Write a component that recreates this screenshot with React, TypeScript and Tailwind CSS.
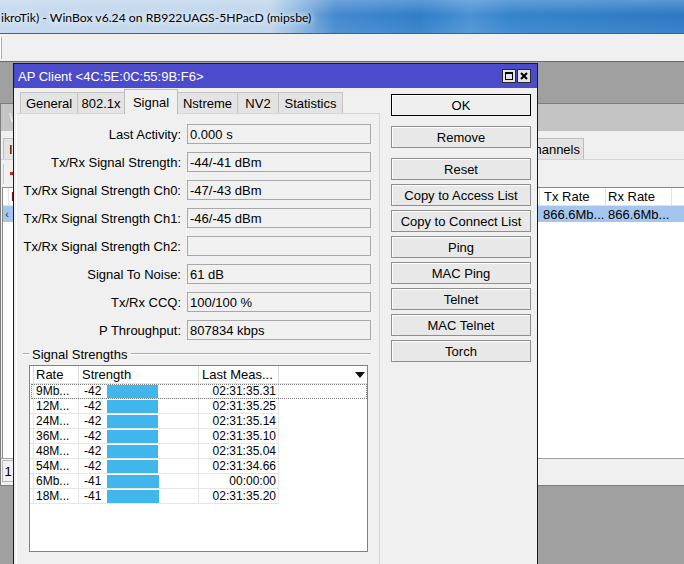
import React from "react";

const fields: [string, string][] = [
  ["Last Activity:", "0.000 s"],
  ["Tx/Rx Signal Strength:", "-44/-41 dBm"],
  ["Tx/Rx Signal Strength Ch0:", "-47/-43 dBm"],
  ["Tx/Rx Signal Strength Ch1:", "-46/-45 dBm"],
  ["Tx/Rx Signal Strength Ch2:", ""],
  ["Signal To Noise:", "61 dB"],
  ["Tx/Rx CCQ:", "100/100 %"],
  ["P Throughput:", "807834 kbps"],
];

const rates = [
  { rate: "9Mb...", s: "-42", wide: false, t: "02:31:35.31" },
  { rate: "12M...", s: "-42", wide: false, t: "02:31:35.25" },
  { rate: "24M...", s: "-42", wide: false, t: "02:31:35.14" },
  { rate: "36M...", s: "-42", wide: false, t: "02:31:35.10" },
  { rate: "48M...", s: "-42", wide: false, t: "02:31:35.04" },
  { rate: "54M...", s: "-42", wide: false, t: "02:31:34.66" },
  { rate: "6Mb...", s: "-41", wide: true, t: "00:00:00" },
  { rate: "18M...", s: "-41", wide: true, t: "02:31:35.20" },
];

const tabs = [
  { label: "General", cls: "w-[58px]" },
  { label: "802.1x", cls: "w-[48px]" },
  { label: "Signal", cls: "w-[54px]", active: true },
  { label: "Nstreme", cls: "w-[61px]" },
  { label: "NV2", cls: "w-[42px]" },
  { label: "Statistics", cls: "w-[65px]" },
];

const buttons = [
  { label: "OK", cls: "border-black bg-[#efefef]" },
  { label: "Remove", cls: "mt-[10px]" },
  { label: "Reset", cls: "mt-[10px]" },
  { label: "Copy to Access List", cls: "mt-[4px]" },
  { label: "Copy to Connect List", cls: "mt-[4px]" },
  { label: "Ping", cls: "mt-[4px]" },
  { label: "MAC Ping", cls: "mt-[4px]" },
  { label: "Telnet", cls: "mt-[4px]" },
  { label: "MAC Telnet", cls: "mt-[4px]" },
  { label: "Torch", cls: "mt-[4px]" },
];

/* tabs of the window behind; the ones fully hidden by the dialog carry no visible label */
const hiddenTabs = ["w-[90px]", "w-[75px]", "w-[82px]", "w-[80px]", "w-[118px]"];

function MaxBtn() {
  return (
    <svg width="14" height="14" viewBox="0 0 14 14">
      <rect x="0.5" y="0.5" width="13" height="13" fill="#e4e4e4" stroke="#2a2a2a" />
      <rect x="3.5" y="3.5" width="7" height="7" fill="none" stroke="#000" />
      <line x1="3" y1="4.5" x2="11" y2="4.5" stroke="#000" />
    </svg>
  );
}

function CloseBtn() {
  return (
    <svg width="14" height="14" viewBox="0 0 14 14">
      <rect x="0.5" y="0.5" width="13" height="13" fill="#e4e4e4" stroke="#2a2a2a" />
      <path d="M4 4 L10 10 M10 4 L4 10" stroke="#000" strokeWidth="2" />
    </svg>
  );
}

function InnerWindow() {
  return (
    <div className="absolute left-0 top-[41px] w-[720px] h-[383px] border border-[#7d7d7d] bg-[#f0f0f0] flex flex-col">
      <div className="h-[27px] shrink-0 bg-[#c4c4c4] flex items-center pl-[8px]">
        <span className="w-[5px] overflow-hidden whitespace-nowrap text-[#eeeeee]">W</span>
      </div>
      <div className="h-[29px] shrink-0 flex items-end pl-[2px] border-b border-[#d4d4d4]">
        <div className="w-[72px] h-[21px] flex items-center pl-[5px] border border-b-0 border-[#bdbdbd] bg-[#e3e3e3] -mr-px">
          <span className="w-[5px] overflow-hidden whitespace-nowrap">I</span>
        </div>
        {hiddenTabs.map((c, i) => (
          <div key={i} className={`${c} h-[21px] border border-b-0 border-[#bdbdbd] bg-[#e3e3e3] -mr-px`} />
        ))}
        <div className="w-[70px] h-[21px] flex items-center justify-end pr-[3px] border border-b-0 border-[#bdbdbd] bg-[#e3e3e3]">
          hannels
        </div>
      </div>
      <div className="h-[27px] shrink-0 flex items-center pl-[2px]">
        <div className="w-[18px] h-[20px] border-l border-[#c8c8c8] flex items-center pl-[6px]">
          <div className="w-[6px] h-[3px] bg-[#c82020]" />
        </div>
      </div>
      <div className="h-[271px] shrink-0 ml-[1px] border-t border-l border-[#8a8a8a] bg-white flex flex-col">
        <div className="h-[18px] shrink-0 flex border-b border-[#e2e2e2]">
          <div className="w-[6px] border-r border-[#e2e2e2]" />
          <div className="w-[531px] border-r border-[#e2e2e2] pl-[2px] flex items-center">
            <span className="w-[5px] overflow-hidden whitespace-nowrap">R</span>
          </div>
          <div className="w-[66px] border-r border-[#e2e2e2] pl-[4px] flex items-center">Tx Rate</div>
          <div className="w-[66px] border-r border-[#e2e2e2] pl-[2px] flex items-center">Rx Rate</div>
          <div className="flex-1" />
        </div>
        <div className="h-[16px] shrink-0 flex bg-[#a4c6ee]">
          <div className="w-[6px] flex items-center justify-end text-[11px] text-[#333]">‹</div>
          <div className="w-[531px]" />
          <div className="w-[66px] pl-[3px] flex items-center">866.6Mb...</div>
          <div className="w-[66px] pl-[2px] flex items-center">866.6Mb...</div>
          <div className="flex-1" />
        </div>
      </div>
      <div className="h-[25px] shrink-0 border-t border-[#a0a0a0] flex items-center pl-[1px]">
        <div className="w-[12px] h-[22px] border border-[#b8b8b8] flex items-center justify-center">1</div>
      </div>
    </div>
  );
}

function Dialog() {
  return (
    <div className="absolute left-[13px] top-[1px] w-[525px] h-[520px] border border-[#1a1a1a] bg-[#f0f0f0] flex flex-col">
      <div className="h-[24px] shrink-0 bg-[#4b4bcb] flex items-center pl-[4px] pr-[6px]">
        <span className="flex-1 text-white">AP Client &lt;4C:5E:0C:55:9B:F6&gt;</span>
        <div className="flex gap-[1px]">
          <MaxBtn />
          <CloseBtn />
        </div>
      </div>
      <div className="flex-1 flex pl-[2px]">
        <div className="w-[364px] flex flex-col">
          <div className="h-[25px] shrink-0 flex items-end pl-[4px]">
            {tabs.map((t) =>
              t.active ? (
                <div
                  key={t.label}
                  className={`${t.cls} h-[25px] -mb-px relative z-10 flex items-center justify-center border border-b-0 border-[#bdbdbd] bg-[#f0f0f0] -mr-px`}
                >
                  {t.label}
                </div>
              ) : (
                <div
                  key={t.label}
                  className={`${t.cls} h-[21px] flex items-center justify-center border border-b-0 border-[#c4c4c4] bg-[#e3e3e3] -mr-px`}
                >
                  {t.label}
                </div>
              )
            )}
          </div>
          <div className="flex-1 border border-[#d6d6d6] border-l-white bg-[#f0f0f0] flex flex-col">
            <div className="pt-[10px] grid grid-cols-[164px_184px] gap-x-[6px] gap-y-[8px]">
              {fields.map(([l, v]) => (
                <React.Fragment key={l}>
                  <div className="h-[20px] flex items-center justify-end">{l}</div>
                  <div className="h-[20px] flex items-center border border-[#a8a8a8] bg-[#f0f0f0] pl-[2px]">{v}</div>
                </React.Fragment>
              ))}
            </div>
            <div className="mt-[6px] h-[16px] flex items-center ml-[6px] mr-[8px]">
              <div className="w-[6px] h-0 border-t border-[#a9a9a9] border-b border-b-white" />
              <span className="ml-[3px] mr-[4px]">Signal Strengths</span>
              <div className="flex-1 h-0 border-t border-[#a9a9a9] border-b border-b-white" />
            </div>
            <div className="ml-[12px] mt-[3px] w-[339px] h-[187px] border border-[#828282] bg-white flex flex-col">
              <div className="h-[18px] shrink-0 flex border-b border-[#e3e3e3]">
                <div className="w-[4px] border-r border-[#dcdcdc]" />
                <div className="w-[45px] border-r border-[#dcdcdc] pl-[2px] flex items-center">Rate</div>
                <div className="w-[120px] border-r border-[#dcdcdc] pl-[3px] flex items-center">Strength</div>
                <div className="w-[80px] border-r border-[#dcdcdc] pl-[3px] flex items-center">Last Meas...</div>
                <div className="flex-1 flex items-center justify-end pr-[2px]">
                  <svg width="10" height="6" viewBox="0 0 10 6">
                    <path d="M0 0 H10 L5 6 Z" fill="#111" />
                  </svg>
                </div>
              </div>
              {rates.map((r, i) => (
                <div key={r.rate} className="h-[15px] shrink-0 flex relative text-[12px]">
                  <div className="w-[4px] border-r border-b border-[#e6e6e6]" />
                  <div className="w-[45px] border-r border-b border-[#e6e6e6] pl-[2px] flex items-center">{r.rate}</div>
                  <div className="w-[120px] border-r border-b border-[#e6e6e6] pl-[5px] flex items-center">
                    <span className="w-[23px]">{r.s}</span>
                    <span className={`h-[13px] ${r.wide ? "w-[52px]" : "w-[51px]"} bg-[#40b6ec]`} />
                  </div>
                  <div className="w-[80px] border-r border-b border-[#e6e6e6] pr-[2px] flex items-center justify-end">{r.t}</div>
                  {i === 0 && (
                    <div className="absolute left-[1px] right-0 top-0 bottom-0 border border-dotted border-[#7a7a7a]" />
                  )}
                </div>
              ))}
            </div>
          </div>
        </div>
        <div className="w-[140px] ml-[11px] pt-[6px] flex flex-col">
          {buttons.map((b) => (
            <div
              key={b.label}
              className={`h-[22px] shrink-0 flex items-center justify-center border border-[#8e8e8e] bg-[#e8e8e8] shadow-[inset_1px_1px_0_#fdfdfd] ${b.cls}`}
            >
              {b.label}
            </div>
          ))}
        </div>
      </div>
    </div>
  );
}

export default function App() {
  return (
    <div className="w-[684px] h-[564px] overflow-hidden flex flex-col bg-[#a0a0a0] font-['Liberation_Sans',Arial,sans-serif] text-[13px] text-black leading-none">
      <div className="h-[33px] shrink-0 relative flex items-center bg-[linear-gradient(to_right,#c3d8ed_0px,#bdd4eb_270px,#8ab6e0_298px,#4489cf_335px,#2f7ec9_420px,#4a91d4_470px,#3584cc_510px,#2b79c4_684px)]">
        <div className="absolute inset-0 bg-[linear-gradient(to_bottom,rgba(255,255,255,0.22),rgba(255,255,255,0)_45%,rgba(255,255,255,0.08)_100%)]" />
        <span className="relative pl-[1px] pt-[4px] font-['Segoe_UI',Lato,sans-serif] text-[12.2px] text-black [text-shadow:0_0_6px_#ffffff,0_0_10px_#ffffff]">
          ikroTik) - WinBox v6.24 on RB922UAGS-5HPacD (mipsbe)
        </span>
      </div>
      <div className="h-px shrink-0 bg-[#4e5f74]" />
      <div className="h-[27px] shrink-0 bg-[#f0f0f0] flex items-center">
        <div className="w-[2px] h-[22px] bg-white border-r border-[#b0b0b0]" />
      </div>
      <div className="h-px shrink-0 bg-[#6a6a6a]" />
      <div className="flex-1 relative">
        <InnerWindow />
        <Dialog />
      </div>
    </div>
  );
}
